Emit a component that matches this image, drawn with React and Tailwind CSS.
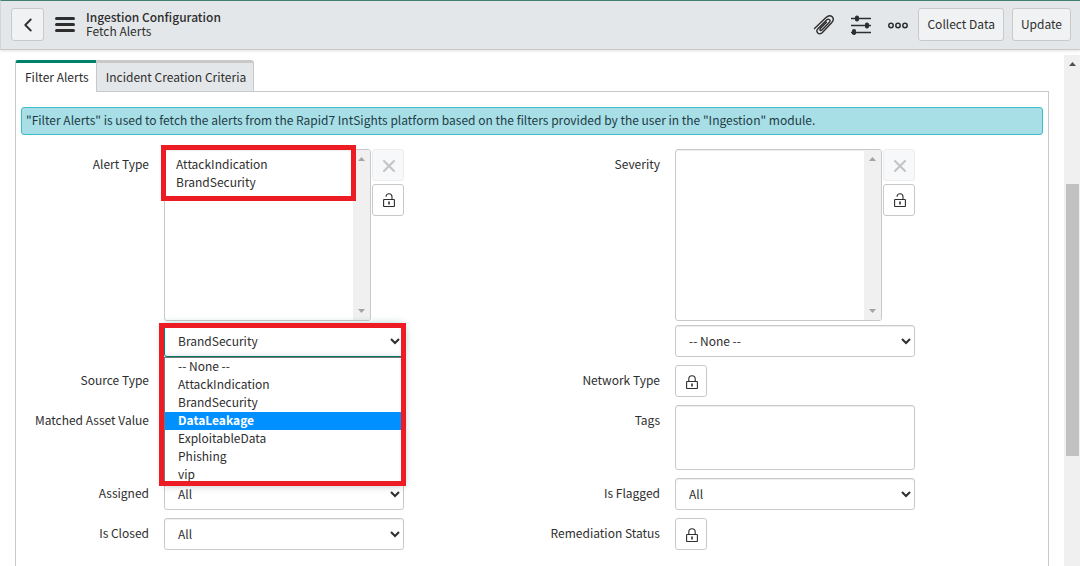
import { ChevronLeft, X } from 'lucide-react';

const ALERT_TYPES = ['-- None --', 'AttackIndication', 'BrandSecurity', 'DataLeakage', 'ExploitableData', 'Phishing', 'vip'];

const PaperclipIcon = () => (
    <svg width="22" height="22" viewBox="0 0 22 22" fill="none" stroke="#2e2e2e" strokeWidth="1.4" strokeLinecap="round" strokeLinejoin="round">
        <path d="M1.5 14.5 L13 3.5 C15 1.6 17.5 1.2 19.2 2.8 C20.8 4.4 20.4 6.8 18.6 8.8 L9.4 18.6 C8 20 6 20.2 4.8 19 C3.6 17.8 3.8 15.8 5.2 14.4 L13.6 6 C14.6 5 15.8 5 16.5 5.7 C17.2 6.4 17.1 7.6 16.2 8.6 L9.2 15.8 C8.4 16.6 7.6 16.6 7.2 16.2 C6.8 15.8 6.9 15 7.6 14.2 L13.5 8.3" />
    </svg>
);

const SlidersIcon = () => (
    <svg width="20" height="20" viewBox="0 0 20 20" stroke="#2e2e2e" strokeWidth="1.7" fill="#2e2e2e">
        <path d="M0 3.5h20M0 10.5h20M0 17.5h20" />
        <g stroke="none">
            <rect x="4" y="0.5" width="4" height="6" rx="1.8" />
            <rect x="14" y="7.5" width="4" height="6" rx="1.8" />
            <rect x="1" y="14" width="4" height="6" rx="1.8" />
        </g>
    </svg>
);

const MoreIcon = () => (
    <svg width="20" height="8" viewBox="0 0 20 8" fill="none" stroke="#2e2e2e" strokeWidth="1.5">
        <circle cx="3" cy="4.5" r="2.2" />
        <circle cx="10" cy="4.5" r="2.2" />
        <circle cx="17" cy="4.5" r="2.2" />
    </svg>
);

const LockIcon = ({ open }) => (
    <svg width="12" height="14" viewBox="0 0 12 14" fill="none" stroke="#2e2e2e" strokeWidth="1.1">
        <rect x="0.6" y="6.5" width="10.8" height="7" rx="0.5" />
        {open ? <path d="M3 3.8C3 2 4.2 0.8 6 0.8S9 2 9 3.8V6.5" /> : <path d="M2.8 6.5V4C2.8 2 4.2 0.8 6 0.8S9.2 2 9.2 4V6.5" />}
        <path d="M6 8.5v3" strokeWidth="1.6" />
    </svg>
);

const LockButton = ({ label, open = false, id }) => (
    <button
        id={id}
        aria-label={label}
        className={`flex h-8 w-8 items-center justify-center rounded-[3px] border border-[#c9c9c9] bg-white pl-px ${open ? '' : 'pt-[2px]'}`}
    >
        <LockIcon open={open} />
    </button>
);

const Select = ({ id, options, value, focused = false }) => (
    <select
        id={id}
        defaultValue={value}
        className={`h-8 w-full rounded-[3px] border bg-white pb-[2px] pl-[9px] text-[#2e2e2e] ${
            focused ? 'border-[#00816d] shadow-[0_0_8px_rgba(0,129,109,0.5)]' : 'border-[#c9c9c9] shadow-[inset_0_1px_1px_rgba(0,0,0,0.075)]'
        }`}
    >
        {options.map((o) => <option key={o}>{o}</option>)}
    </select>
);

const TextArea = ({ id }) => (
    <textarea id={id} className="block h-[65px] w-full resize-none rounded-[3px] border border-[#c9c9c9] bg-white px-3 py-1.5 shadow-[inset_0_1px_1px_rgba(0,0,0,0.075)]" />
);

const Field = ({ label, id, children }) => (
    <div className="grid grid-cols-[143px_minmax(0,240px)]">
        <label htmlFor={id} className="pr-[15px] text-right leading-[30px]">{label}</label>
        <div className="relative">{children}</div>
    </div>
);

const PickList = ({ id, items }) => (
    <div className="mb-1 flex gap-px">
        <div className="flex h-[172px] flex-1 overflow-hidden rounded-[3px] border border-[#c9c9c9] bg-white shadow-[inset_0_1px_1px_rgba(0,0,0,0.075)]">
            <select id={id} multiple className="h-full min-w-0 flex-1 overflow-hidden bg-transparent py-[5px] pl-[9px]">
                {items.map((i) => <option key={i} className="h-[18px] px-[2px] py-0 leading-[18px]">{i}</option>)}
            </select>
            <div className="flex w-[17px] flex-col items-center justify-between bg-[#f0f0f0] py-[7px]">
                <svg width="7" height="4" viewBox="0 0 7 4" fill="#a3a3a3"><path d="M3.5 0L7 4H0z" /></svg>
                <svg width="7" height="4" viewBox="0 0 7 4" fill="#a3a3a3"><path d="M0 0h7L3.5 4z" /></svg>
            </div>
        </div>
        <div className="flex flex-col gap-[3px]">
            <button disabled aria-label="Remove selected" className="flex h-8 w-8 items-center justify-center rounded-[3px] border border-[#ededee] bg-[#f7f8f9] pt-[2px] pl-[2px] text-[#c4c4c4]">
                <X size={20} strokeWidth={2.5} />
            </button>
            <LockButton label="Lock list" open />
        </div>
    </div>
);

const HeaderButton = ({ children }) => (
    <button className="h-[33px] rounded-[3px] border border-[#c9c9c9] bg-[#f1f2f4] px-2 pb-[2px]">{children}</button>
);

export default function App() {
    return (
        <div className="flex h-screen flex-col overflow-hidden bg-white font-['Noto_Sans_CJK_SC','Noto_Sans',sans-serif] text-xs leading-[18px] text-[#2e2e2e]">
            {/* Header */}
            <header className="flex h-[50px] shrink-0 items-center border-t border-b border-l border-t-[#42806d] border-b-[#c9c9c9] border-l-[#d3d5d8] bg-[#e4e7ea] pr-[9px] pb-px pl-[10px] shadow-[0_1px_3px_rgba(0,0,0,0.12)]">
                <button aria-label="Back" className="flex h-[33px] w-[33px] items-center justify-center rounded-[3px] border border-[#c9c9c9] bg-[#f1f2f4]">
                    <ChevronLeft size={22} strokeWidth={2} />
                </button>
                <button aria-label="Menu" className="ml-[11px] flex w-5 flex-col gap-[3px]">
                    <span className="h-[3px] w-full rounded-full bg-[#2e2e2e]" />
                    <span className="h-[3px] w-full rounded-full bg-[#2e2e2e]" />
                    <span className="h-[3px] w-full rounded-full bg-[#2e2e2e]" />
                </button>
                <div className="ml-[11px] flex-1 pb-[2px] leading-[14px]">
                    <h1 className="font-medium">Ingestion Configuration</h1>
                    <p>Fetch Alerts</p>
                </div>
                <div className="flex items-center">
                    <button aria-label="Attachments" className="mr-4"><PaperclipIcon /></button>
                    <button aria-label="Personalize form" className="mr-[17px]"><SlidersIcon /></button>
                    <button aria-label="More options" className="mr-[10px]"><MoreIcon /></button>
                    <div className="flex gap-2">
                        <HeaderButton>Collect Data</HeaderButton>
                        <HeaderButton>Update</HeaderButton>
                    </div>
                </div>
            </header>

            <div className="flex min-h-0 flex-1">
                <main className="flex min-w-0 flex-1 flex-col pt-[10px] pr-[15px] pl-[15px]">
                    {/* Tabs */}
                    <div role="tablist" className="z-10 -mb-px flex">
                        <button role="tab" aria-selected="true" className="h-8 rounded-tl-[3px] border-t-[3px] border-l border-t-[#00816d] border-l-[#c9c9c9] bg-white pr-[7px] pb-px pl-[9px]">
                            Filter Alerts
                        </button>
                        <button role="tab" aria-selected="false" className="h-8 rounded-tr-[3px] border border-t-[3px] border-[#c9c9c9] bg-[#e4e7ea] pr-[7px] pl-[9px]">
                            Incident Creation Criteria
                        </button>
                    </div>

                    <div className="flex-1 border-x border-t border-[#c9c9c9] px-[5px] pt-[15px]">
                        <div className="mb-[14px] h-7 rounded-[3px] border border-[#3dbdcc] bg-[#a8dee6] px-1 leading-[24px] text-[#1d3c46]">
                            "Filter Alerts" is used to fetch the alerts from the Rapid7 IntSights platform based on the filters provided by the user in the "Ingestion" module.
                        </div>

                        <form className="grid grid-cols-2">
                            <div className="flex flex-col gap-2">
                                <Field label="Alert Type" id="alert-type">
                                    <PickList id="alert-type" items={['AttackIndication', 'BrandSecurity']} />
                                    <Select id="alert-type-add" options={ALERT_TYPES} value="BrandSecurity" focused />
                                    {/* Open options menu */}
                                    <ul className="absolute top-full left-0 z-10 h-[126px] w-full overflow-hidden border-t border-l border-[#767676] bg-white leading-4 shadow-[0_2px_8px_rgba(0,0,0,0.3)]">
                                        {ALERT_TYPES.map((type) => (
                                            <li key={type} className={`h-[18px] pl-[13px] ${type === 'DataLeakage' ? 'bg-[#0090ff] font-bold text-white' : ''}`}>
                                                {type}
                                            </li>
                                        ))}
                                    </ul>
                                    {/* Highlight frames */}
                                    <div className="absolute -top-1 -left-[3px] z-20 h-14 w-[195px] border-5 border-[#ed1c24]" />
                                    <div className="absolute top-[174px] -left-[5px] z-20 h-[163px] w-[247px] border-5 border-[#ed1c24]" />
                                </Field>
                                <Field label="Source Type" id="source-type"><LockButton id="source-type" label="Source Type" /></Field>
                                <Field label="Matched Asset Value" id="asset-value"><TextArea id="asset-value" /></Field>
                                <Field label="Assigned" id="assigned"><Select id="assigned" options={['All']} /></Field>
                                <Field label="Is Closed" id="is-closed"><Select id="is-closed" options={['All']} /></Field>
                            </div>
                            <div className="flex flex-col gap-2">
                                <Field label="Severity" id="severity">
                                    <PickList id="severity" items={[]} />
                                    <Select id="severity-add" options={['-- None --']} />
                                </Field>
                                <Field label="Network Type" id="network-type"><LockButton id="network-type" label="Network Type" /></Field>
                                <Field label="Tags" id="tags"><TextArea id="tags" /></Field>
                                <Field label="Is Flagged" id="is-flagged"><Select id="is-flagged" options={['All']} /></Field>
                                <Field label="Remediation Status" id="remediation"><LockButton id="remediation" label="Remediation Status" /></Field>
                            </div>
                        </form>
                    </div>
                </main>

                {/* Page scrollbar */}
                <div className="mt-[5px] flex w-4 shrink-0 flex-col items-center bg-[#f0f0f0] pt-[7px]">
                    <svg width="7" height="4" viewBox="0 0 7 4" fill="#505050"><path d="M3.5 0L7 4H0z" /></svg>
                    <div className="mt-[118px] h-[272px] w-[13px] bg-[#c1c1c1]" />
                </div>
            </div>
        </div>
    );
}
